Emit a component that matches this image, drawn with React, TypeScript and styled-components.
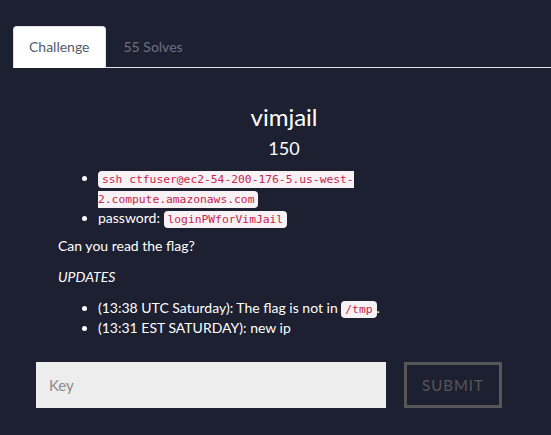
import React from "react";
import styled, { createGlobalStyle } from "styled-components";

const Global = createGlobalStyle`
  html, body { margin: 0; padding: 0; background: #1c2031; }
  body { font-family: Lato, "Open Sans", sans-serif; font-size: 14px; line-height: 20px; color: #ffffff; }
  * { box-sizing: border-box; }
`;

const Page = styled.div`
  width: 551px;
  height: 435px;
  overflow: hidden;
  padding-top: 26px;
  background: #1c2031;
`;

const TabBar = styled.div`
  display: flex;
  margin-left: 13px;
  border-bottom: 1px solid #dfe1e6;
`;

const Tab = styled.div<{ $active?: boolean }>`
  padding: 10px 15px;
  margin-right: 2px;
  margin-bottom: -1px;
  border-radius: 4px 4px 0 0;
  border: 1px solid ${(p) => (p.$active ? "#dfe1e6" : "transparent")};
  border-bottom-color: ${(p) => (p.$active ? "#ffffff" : "transparent")};
  background: ${(p) => (p.$active ? "#ffffff" : "transparent")};
  color: ${(p) => (p.$active ? "#555b6b" : "#6e7280")};
  font-size: 14px;
  line-height: 20px;
`;

const Body = styled.div`
  padding: 0 0 0 58px;
  margin-right: -4px;
`;

const Title = styled.h3`
  margin: 36px 0 0 -45px;
  text-align: center;
  font-size: 24px;
  font-weight: 400;
  line-height: 26px;
`;

const Value = styled.h4`
  margin: 8px 0 10px -45px;
  text-align: center;
  font-size: 18px;
  font-weight: 400;
  line-height: 20px;
`;

const List = styled.ul<{ $narrow?: boolean }>`
  margin: 0 0 ${(p) => (p.$narrow ? "8px" : "10px")};
  padding-left: 40px;
  width: ${(p) => (p.$narrow ? "325px" : "auto")};
`;

const Item = styled.li`
  line-height: 20px;
`;

const Code = styled.code`
  font-family: "DejaVu Sans Mono", "Liberation Mono", monospace;
  font-size: 11.3px;
  line-height: 1;
  padding: 2px 4px;
  color: #c7254e;
  background: #f9f2f4;
  border-radius: 4px;
`;

const Para = styled.p`
  margin: 0 0 11px;
`;

const Em = styled.p`
  margin: 0 0 11px;
  font-style: italic;
`;

const Form = styled.form`
  display: flex;
  gap: 18px;
  margin: 24px 0 0 36px;
`;

const KeyInput = styled.input`
  width: 350px;
  height: 46px;
  border: none;
  outline: none;
  background: #ededed;
  padding: 0 13px;
  font-family: Lato, sans-serif;
  font-size: 15px;
  color: #333;
  &::placeholder { color: #8a8a8a; }
`;

const Submit = styled.button`
  width: 98px;
  height: 46px;
  background: transparent;
  border: 3px solid #575757;
  color: #575757;
  font-family: Lato, sans-serif;
  font-size: 15px;
  letter-spacing: 1px;
`;

export default function App() {
  return (
    <>
      <Global />
      <Page>
        <TabBar>
          <Tab $active>Challenge</Tab>
          <Tab>55 Solves</Tab>
        </TabBar>
        <Body>
          <Title>vimjail</Title>
          <Value>150</Value>
          <List $narrow>
            <Item>
              <Code>ssh ctfuser@ec2-54-200-176-5.us-west-2.compute.amazonaws.com</Code>
            </Item>
            <Item>
              password: <Code>loginPWforVimJail</Code>
            </Item>
          </List>
          <Para>Can you read the flag?</Para>
          <Em>UPDATES</Em>
          <List>
            <Item>
              (13:38 UTC Saturday): The flag is not in <Code>/tmp</Code>.
            </Item>
            <Item>(13:31 EST SATURDAY): new ip</Item>
          </List>
        </Body>
        <Form onSubmit={(e) => e.preventDefault()}>
          <KeyInput placeholder="Key" />
          <Submit type="button">SUBMIT</Submit>
        </Form>
      </Page>
    </>
  );
}
